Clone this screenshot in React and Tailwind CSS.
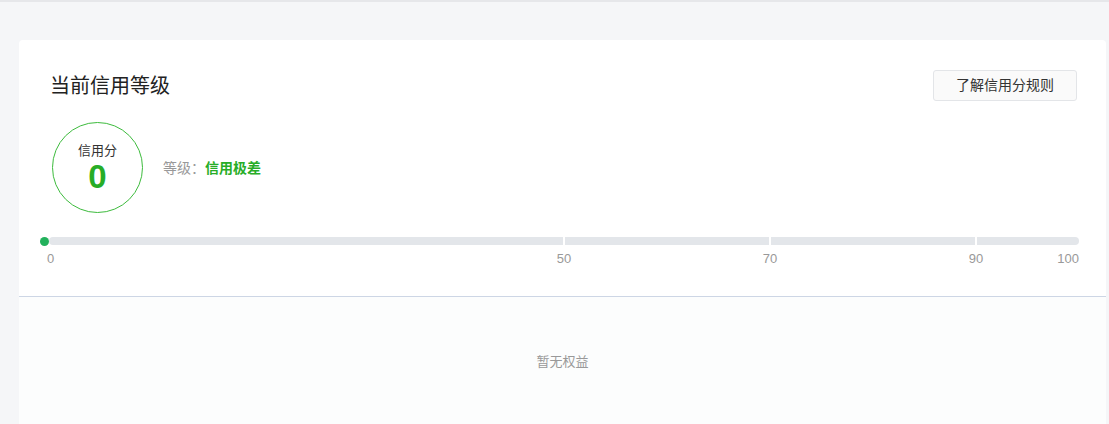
import React from "react";

const FONT = { fontFamily: '"Liberation Sans", "Noto Sans CJK SC", sans-serif' };

export default function App() {
  const ticks = [50, 70, 90];
  return (
    <div className="w-[1109px] h-[424px] overflow-hidden bg-[#f5f6f8]" style={FONT}>
      <div className="h-[2px] bg-[#e6e7ea]" />
      <div className="ml-[19px] mt-[38px] w-[1087px] h-[400px] bg-white rounded-t-[4px] flex flex-col">
        <div className="flex items-center justify-between pt-[30px] pl-[31px] pr-[29px]">
          <div className="text-[20px] leading-[24px] text-[#222] mt-[1px]">当前信用等级</div>
          <button className="h-[31px] w-[144px] border border-[#e3e5e8] bg-[#fafafa] rounded-[3px] text-[14px] text-[#333]">
            了解信用分规则
          </button>
        </div>
        <div className="flex items-center mt-[21px] pl-[33px]">
          <div className="w-[91px] h-[91px] rounded-full border border-[#3dbb3d] flex flex-col items-center justify-center">
            <div className="text-[13px] leading-[18px] text-[#333]">信用分</div>
            <div className="text-[33px] leading-[32px] font-bold text-[#27ad27] mt-[1px]">0</div>
          </div>
          <div className="ml-[20px] text-[14px] leading-[18px]">
            <span className="text-[#999]">等级：</span>
            <span className="text-[#27ad27] font-bold">信用极差</span>
          </div>
        </div>
        <div className="mt-[24px] pl-[30px] pr-[27px]">
          <div className="relative h-[8px] bg-[#e3e6ea] rounded-full">
            <div className="absolute left-[-9px] top-[-0.5px] w-[9px] h-[9px] rounded-full bg-[#22b15c]" />
            {ticks.map((t) => (
              <div
                key={t}
                className="absolute top-0 h-[8px] w-[2px] bg-white"
                style={{ left: `calc(${t}% - 1px)` }}
              />
            ))}
          </div>
          <div className="relative h-[16px] mt-[6px] text-[13px] leading-[16px] text-[#999]">
            <span className="absolute left-[-2px]">0</span>
            {ticks.map((t) => (
              <span
                key={t}
                className="absolute -translate-x-1/2"
                style={{ left: `${t}%` }}
              >
                {t}
              </span>
            ))}
            <span className="absolute right-0">100</span>
          </div>
        </div>
        <div className="mt-[29px] h-px bg-[#cdd6e5]" />
        <div className="flex-1 bg-[#fcfdfd] flex justify-center pt-[56px]">
          <div className="text-[13px] leading-[18px] text-[#999]">暂无权益</div>
        </div>
      </div>
    </div>
  );
}
